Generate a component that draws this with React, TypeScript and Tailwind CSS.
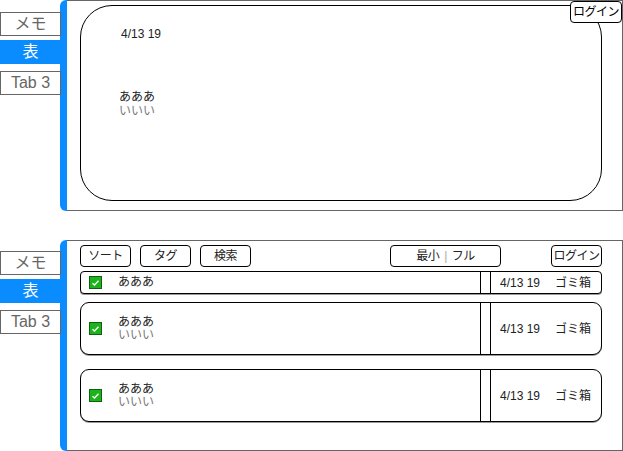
import React from 'react';

const font = { fontFamily: '"Liberation Sans", "Noto Sans CJK JP", sans-serif' };

function Tabs() {
  return (
    <div className="w-[61px] flex flex-col shrink-0 relative z-10">
      <div className="h-[24px] border border-[#666] bg-white text-[#666] text-[16px] leading-[22px] text-center">メモ</div>
      <div className="h-[24px] mt-[4px] bg-[#0a8cff] text-white text-[16px] leading-[24px] text-center">表</div>
      <div className="h-[24px] mt-[7px] border border-[#666] bg-white text-[#666] text-[16px] leading-[22px] text-center">Tab 3</div>
    </div>
  );
}

function Btn({ children, w }: { children: React.ReactNode; w: string }) {
  return (
    <div className={`${w} h-[22px] border border-black rounded-[4px] bg-white text-[12px] leading-[20px] text-center text-[#222] whitespace-nowrap tracking-[-0.5px]`}>
      {children}
    </div>
  );
}

function Check() {
  return (
    <div className="w-[13px] h-[13px] bg-[#1db31d] border border-[#106010] flex items-center justify-center shrink-0">
      <svg width="9" height="8" viewBox="0 0 9 8">
        <path d="M1.5 4.2 L3.5 6 L7.5 1.8" fill="none" stroke="white" strokeWidth="1.3" />
      </svg>
    </div>
  );
}

function Row({ tall }: { tall?: boolean }) {
  return (
    <div
      className={`flex border border-black bg-white shadow-[0_1px_0_#999] ${
        tall ? 'h-[53px] rounded-[9px]' : 'h-[23px] rounded-[4px]'
      }`}
    >
      <div className="flex-1 flex items-center pl-[8px]">
        <Check />
        <div className="ml-[16px] text-[12px] leading-[13px]">
          <div className="text-[#222]">あああ</div>
          {tall && <div className="text-[#777]">いいい</div>}
        </div>
      </div>
      <div className="w-[11px] border-x border-black" />
      <div className="w-[110px] flex items-center text-[12px] text-[#222] whitespace-nowrap">
        <span className="ml-[9px]">4/13 19</span>
        <span className="ml-[15px]">ゴミ箱</span>
      </div>
    </div>
  );
}

export default function App() {
  return (
    <div className="w-[623px] h-[451px] bg-white overflow-hidden" style={font}>
      {/* top section */}
      <div className="flex h-[211px]">
        <div className="pt-[12px]">
          <Tabs />
        </div>
        <div className="flex-1 flex -ml-[1px]">
          <div className="w-[7px] bg-[#0a8cff] rounded-l-[6px]" />
          <div className="flex-1 relative border-y border-r border-[#666] pt-[4px] pb-[9px] pl-[13px] pr-[20px]">
            <div className="h-full border border-black rounded-[32px] pl-[40px] pt-[19px]">
              <div className="text-[12px] text-[#222]">4/13 19</div>
              <div className="mt-[47px] -ml-[2px] text-[12px] leading-[14px]">
                <div className="text-[#222]">あああ</div>
                <div className="text-[#777]">いいい</div>
              </div>
            </div>
            <div className="absolute top-0 right-0 w-[52px] h-[22px] border border-black rounded-[4px] bg-white text-[12px] leading-[20px] text-center whitespace-nowrap tracking-[-0.5px]">
              ログイン
            </div>
          </div>
        </div>
      </div>

      {/* bottom section */}
      <div className="flex h-[211px] mt-[29px]">
        <div className="pt-[11px]">
          <Tabs />
        </div>
        <div className="flex-1 flex -ml-[1px]">
          <div className="w-[7px] bg-[#0a8cff] rounded-l-[6px]" />
          <div className="flex-1 border-y border-r border-[#666] pt-[4px] pl-[13px] pr-[20px] flex flex-col">
            <div className="flex items-center">
              <Btn w="w-[51px]">ソート</Btn>
              <div className="ml-[9px]"><Btn w="w-[51px]">タグ</Btn></div>
              <div className="ml-[9px]"><Btn w="w-[51px]">検索</Btn></div>
              <div className="ml-[139px]">
                <Btn w="w-[111px]">
                  最小<span className="mx-[5px] text-[#aaa]">|</span>フル
                </Btn>
              </div>
              <div className="ml-auto"><Btn w="w-[51px]">ログイン</Btn></div>
            </div>
            <div className="mt-[4px]"><Row /></div>
            <div className="mt-[8px]"><Row tall /></div>
            <div className="mt-[14px]"><Row tall /></div>
          </div>
        </div>
      </div>
    </div>
  );
}
